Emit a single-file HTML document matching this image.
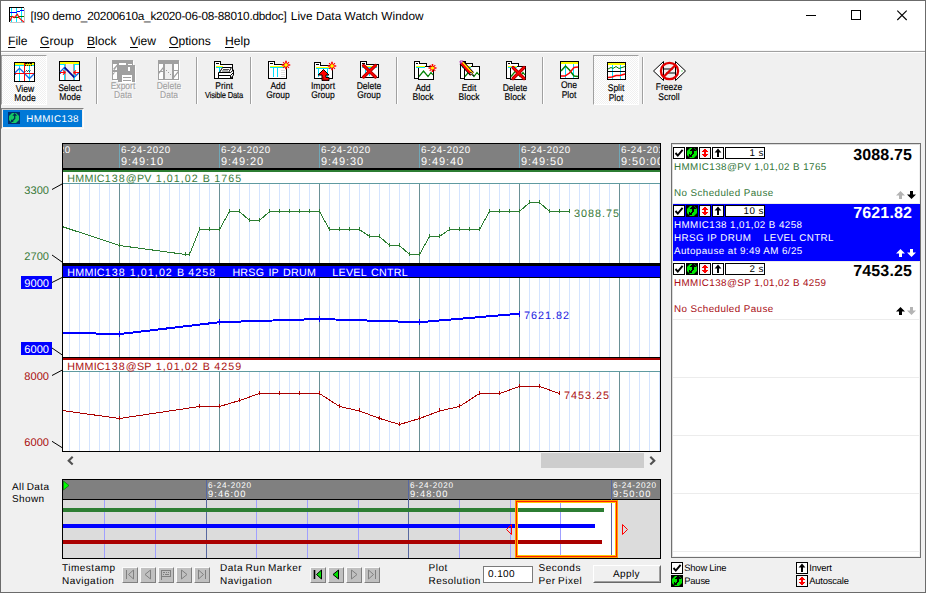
<!DOCTYPE html>
<html><head><meta charset="utf-8"><title>Live Data Watch Window</title>
<style>
*{box-sizing:border-box;margin:0;padding:0;text-rendering:geometricPrecision}
html,body{width:926px;height:593px;overflow:hidden;background:#f0f0f0}
body{font-family:"Liberation Sans",sans-serif;font-size:10.67px;color:#000;position:relative}
.abs,#win *{position:absolute}
#win{position:absolute;left:0;top:0;width:926px;height:593px;background:#f0f0f0;overflow:hidden}
#win span.t, #win text{white-space:pre}
.t{white-space:pre;line-height:1}
/* title */
#title{left:1px;top:1px;width:924px;height:30px;background:#fff}
#title .t{font-size:11.8px;left:29.5px;top:10px;color:#000;letter-spacing:-0.235px}
#menu{left:1px;top:31px;width:924px;height:19px;background:#fff}
#menu .t{font-size:12.1px;top:3.8px}
#menu u{position:static;text-decoration:underline;text-underline-offset:1.5px}
/* toolbar */
.tb{font-size:9.7px;line-height:9px;text-align:center;width:60px;white-space:pre;color:#000;transform:scaleX(0.88);transform-origin:50% 50%;-webkit-text-stroke:0.15px #000}
.tb.dis{-webkit-text-stroke:0.1px #a0a0a0;color:#a0a0a0;text-shadow:1px 1px 0 #fff}
.sep{width:2px;height:47px;top:57px;border-left:1px solid #a0a0a0;border-right:1px solid #fff}
.pressed{border:1px solid;border-color:#a0a0a0 #fff #fff #a0a0a0;background:#f8f8f8}
/* chart */
.cl{font-size:10.67px;letter-spacing:0.85px;line-height:11px;height:11px;overflow:hidden}
.yl{font-size:11.3px;line-height:13px;height:13px;text-align:right;width:32px;left:20px;padding-right:3px}
.rp{font-size:10.67px;line-height:12px}
.big{font-size:16px;font-weight:bold;right:8px;text-align:right;line-height:16px}
.ib{width:12px;height:12px;border:1px solid #000;background:#fff}
.btn3{width:16px;height:16px;background:#c0c0c0;border:1px solid;border-color:#fafafa #808080 #808080 #fafafa}
.lab{font-size:10px;line-height:13px;letter-spacing:0.5px;word-spacing:-0.8px}
</style></head><body><div id="win">
<div style="left:0;top:0;width:926px;height:593px;border:1px solid #6b6b6b;z-index:50;pointer-events:none"></div><div id="title"><svg style="left:8px;top:6px" width="16" height="16" viewBox="0 0 16 16" shape-rendering="crispEdges">
<rect x="0" y="0" width="16" height="16" fill="#fff"/>
<path d="M15.5 1V16M1 15.5H16" stroke="#c4c4c4" fill="none"/>
<path d="M2.5 1V15M7.5 1V15M12.5 1V15" stroke="#00e8ff" fill="none"/>
<path d="M1 9.5H4M4 10.5H10M10 9.5H15" stroke="#008000" fill="none"/>
<path d="M1 5.5H8M8 4.5H11M11 3.5H15" stroke="#0000ff" fill="none"/>
<path d="M1 14 L2.5 10.2 L3.8 9.4 L5.2 10.6 L8.4 7.2 L10 10.6 L12 12.6 L14.8 15" stroke="#ff0000" fill="none" stroke-width="1.15" shape-rendering="auto"/>
<path d="M0.5 0V15" stroke="#000" fill="none"/><path d="M0 0.5H15" stroke="#000" fill="none"/>
</svg><span class="t" id="t1">[I90 demo_20200610a_k2020-06-08-88010.dbdoc]</span><span class="t" id="t2" style="left:289.8px;letter-spacing:0.07px">Live Data Watch Window</span><svg style="left:794px;top:-1px" width="129" height="30" viewBox="0 0 129 30">
<path d="M11 15.5H21" stroke="#000" stroke-width="1" shape-rendering="crispEdges"/>
<rect x="56.5" y="10.5" width="9" height="9" fill="none" stroke="#000" stroke-width="1" shape-rendering="crispEdges"/>
<path d="M102.3 10.6L111.7 20M111.7 10.6L102.3 20" stroke="#000" stroke-width="1.1" fill="none"/>
</svg></div><div id="menu"><span class="t" style="left:7px"><u>F</u>ile</span><span class="t" style="left:39px"><u>G</u>roup</span><span class="t" style="left:86px"><u>B</u>lock</span><span class="t" style="left:129px"><u>V</u>iew</span><span class="t" style="left:168px"><u>O</u>ptions</span><span class="t" style="left:224px"><u>H</u>elp</span></div><div style="left:1px;top:50px;width:924px;height:1px;background:#f6f6f6"></div><div style="left:1px;top:51px;width:924px;height:1px;background:#a0a0a0"></div><div style="left:1px;top:52px;width:924px;height:1px;background:#fff"></div><div class="pressed" style="left:1px;top:55px;width:46px;height:50px;background-image:repeating-conic-gradient(#fff 0% 25%, #f0f0f0 0% 50%);background-size:2px 2px"></div><div class="pressed" style="left:593px;top:55px;width:46px;height:50px;background-image:repeating-conic-gradient(#fff 0% 25%, #f0f0f0 0% 50%);background-size:2px 2px"></div><div class="sep" style="left:96px"></div><div class="sep" style="left:196px"></div><div class="sep" style="left:250px"></div><div class="sep" style="left:396px"></div><div class="sep" style="left:542px"></div><div class="sep" style="left:642px"></div><svg style="left:14px;top:62px;overflow:visible" width="21" height="20" viewBox="0 0 21 20" shape-rendering="crispEdges" >
<rect x="0.5" y="0.5" width="20" height="19" fill="#fff" stroke="#000"/>
<rect x="1" y="1" width="19" height="2" fill="#ffff00"/>
<rect x="1" y="3" width="19" height="1" fill="#00e8ff"/>
<path d="M5.5 3V19M15.5 3V19" stroke="#00e8ff"/>
<rect x="11" y="1" width="7" height="3" fill="#000"/>
<path d="M11.5 2.2l1 1l1 -1l1 1l1 -1l1 1l1 -1" stroke="#ffff00" stroke-width="1.2" fill="none" shape-rendering="auto"/>
<path d="M5.5 2.8l0.8 -0.8l0.8 0.8l0.8 -0.8l0.8 0.8" stroke="#d8d870" stroke-width="0.7" fill="none" shape-rendering="auto"/>
<path d="M10.5 1V19M1 11.5H20" stroke="#ff0000"/>
<path d="M11.5 9.5l1 -1l1 1l1 -1l1 1l1-1" stroke="#000" stroke-width="0.9" fill="none" shape-rendering="auto"/>
<path d="M1 10.8 L5.5 6.3 L10 10.8 M11 12 L15.5 16.5 L20 12" stroke="#1464e6" stroke-width="1.25" fill="none" shape-rendering="auto"/>
<rect x="1" y="12" width="1" height="1" fill="#1464e6"/>
</svg><div class="tb" style="left:-5.5px;top:85.04px;line-height:9px">View<br>Mode</div><svg style="left:59px;top:61px;overflow:visible" width="21" height="20" viewBox="0 0 21 20" shape-rendering="crispEdges" >
<rect x="0.5" y="0.5" width="20" height="19" fill="#fff" stroke="#000"/>
<rect x="1" y="1" width="19" height="2" fill="#ffff00"/>
<rect x="1" y="3" width="19" height="1" fill="#00e8ff"/>
<rect x="7" y="3" width="7" height="16" fill="#f0f0f4"/>
<path d="M5.5 3V19M15.5 3V19" stroke="#00e8ff"/>
<path d="M6.5 3V19M14.5 3V19" stroke="#b49c9c"/>
<path d="M1 11 L5.5 6.5" stroke="#1464e6" stroke-width="1.3" fill="none" shape-rendering="auto"/>
<path d="M5.5 6.3 L15.3 16.3" stroke="#000090" stroke-width="1.7" fill="none" shape-rendering="auto"/>
<path d="M15.3 16.3 L20 11.8" stroke="#1464e6" stroke-width="1.3" fill="none" shape-rendering="auto"/>
<rect x="1" y="12" width="1" height="1" fill="#1464e6"/>
<path d="M1 11.5H6M4 9.3l2.2 2.2l-2.2 2.2M20 11.5H15M17 9.3l-2.2 2.2l2.2 2.2" stroke="#ff0000" fill="none" shape-rendering="auto" stroke-width="1.1"/>
</svg><div class="tb" style="left:40px;top:84.04px;line-height:9px">Select<br>Mode</div><svg style="left:112px;top:60px;overflow:visible" width="23" height="22" viewBox="0 0 23 22" shape-rendering="crispEdges" >
<g transform="translate(1,1)" fill="#fff"><rect x="0" y="0" width="21" height="20"/><rect x="6" y="5" width="17" height="17"/></g>
<rect x="0" y="0" width="21" height="20" fill="#a0a0a0"/>
<rect x="1" y="4" width="4" height="6" fill="#fff"/><rect x="1" y="12" width="4" height="7" fill="#fff"/>
<path d="M1 9 L5 4.5 L5 6.5 L2.5 10Z M1 13 L3.5 12 L1 15Z" fill="#a0a0a0" shape-rendering="auto"/>
<rect x="6" y="5" width="17" height="17" fill="#a0a0a0"/>
<rect x="7" y="3" width="7" height="1.6" fill="#fff"/><rect x="16" y="4" width="4" height="1.2" fill="#fff"/>
<rect x="16" y="7" width="2" height="4" fill="#fff"/>
<rect x="10" y="15" width="10" height="7" fill="#fff"/><rect x="11" y="17" width="8" height="1.4" fill="#a0a0a0"/><rect x="11" y="20" width="8" height="1" fill="#a0a0a0"/>
</svg><div class="tb dis" style="left:93px;top:81.74px;line-height:9px">Export<br>Data</div><svg style="left:158px;top:60px;overflow:visible" width="21" height="20" viewBox="0 0 21 20" shape-rendering="crispEdges" >
<g transform="translate(1,1)"><rect x="0" y="0" width="21" height="20" fill="#fff"/></g>
<rect x="0" y="0" width="21" height="20" fill="#a0a0a0"/>
<rect x="1" y="4" width="4" height="15" fill="#fff"/><rect x="7" y="4" width="7" height="15" fill="#f0f0f0"/><rect x="16" y="4" width="4" height="15" fill="#fff"/>
<path d="M1 12 L5 7 L5 9 L1 14Z M16 16 L20 11 L20 13 L16 18Z" fill="#a0a0a0" shape-rendering="auto"/>
<rect x="1" y="11" width="4" height="1" fill="#a0a0a0"/><rect x="16" y="10" width="4" height="1" fill="#a0a0a0"/>
<rect x="8" y="10" width="1" height="1" fill="#a0a0a0"/><rect x="10" y="12" width="1" height="1" fill="#a0a0a0"/><rect x="12" y="14" width="1" height="1" fill="#a0a0a0"/>
</svg><div class="tb dis" style="left:138.7px;top:81.74px;line-height:9px">Delete<br>Data</div><svg style="left:214px;top:61px;overflow:visible" width="20" height="19" viewBox="0 0 20 19" shape-rendering="crispEdges" ><path d="M0.5 0.5H6.5V3.5H18.5V17.5H0.5Z" fill="#fff" stroke="#000"/><path d="M2 2.5H5" stroke="#000"/>
<rect x="2" y="5" width="7" height="1" fill="#ffff00"/><rect x="2" y="6" width="7" height="1" fill="#00e0ff"/>
<path d="M5.5 7V13" stroke="#00e0ff"/>
<g shape-rendering="auto" stroke="#000" stroke-width="1" fill="#fff">
<path d="M8.5 6.5 H17.5 L14.5 11.5 H5.5Z"/>
<path d="M4.5 11.5 H16.5 L19.5 9 V14 L16.5 17.5 H4.5Z"/>
<path d="M4.5 14.5H16.5L19.5 11.5M16.5 14.5V17.5" fill="none"/>
<path d="M9 8.5H15M8 10H14" stroke-width="0.7"/>
</g></svg><div class="tb" style="left:193.5px;top:81.74px;line-height:9px">Print<br><span style="position:static;font-size:8.6px;letter-spacing:-0.2px">Visible Data</span></div><svg style="left:268px;top:61px;overflow:visible" width="20" height="19" viewBox="0 0 20 19" shape-rendering="crispEdges" ><path d="M0.5 0.5H6.5V3.5H18.5V17.5H0.5Z" fill="#fff" stroke="#000"/><path d="M2 2.5H5" stroke="#000"/>
<rect x="2" y="5" width="15" height="1" fill="#ffff00"/><rect x="2" y="6" width="15" height="1" fill="#00e0ff"/>
<path d="M5.5 7V16M9.5 7V16" stroke="#00e0ff" stroke-width="1"/>
<path d="M13 9.5H17M13 11.5H17M13 13.5H17M13 15.5H17" stroke="#e0e0e0"/><g shape-rendering="auto" transform="translate(18 4) scale(0.85) translate(-18 -4)"><path d="M18 -1V9M13 4H23" stroke="#ff0000" stroke-width="2"/>
<path d="M14.5 0.5L21.5 7.5M21.5 0.5L14.5 7.5" stroke="#ff0000" stroke-width="1.3"/>
<circle cx="18" cy="4" r="2" fill="#ffff00"/></g></svg><div class="tb" style="left:247.5px;top:81.74px;line-height:9px">Add<br>Group</div><svg style="left:314px;top:62px;overflow:visible" width="20" height="18" viewBox="0 0 20 18" shape-rendering="crispEdges" ><path d="M0.5 0.5H6.5V3.5H18.5V16.5H0.5Z" fill="#fff" stroke="#000"/><path d="M2 2.5H5" stroke="#000"/>
<rect x="2" y="5" width="15" height="1" fill="#ffff00"/><rect x="2" y="6" width="15" height="1" fill="#00e0ff"/>
<path d="M4.5 7V15M13.5 7V15" stroke="#00e0ff"/>
<g shape-rendering="auto"><path d="M4 13 L9.5 7.5 L15 13 H12 V15.5 H15 V18.5 H8 V13Z" fill="#ff0000" stroke="#000" stroke-width="1"/><path d="M9 15V18H14" stroke="#800000" fill="none"/></g><g shape-rendering="auto" transform="translate(18 4) scale(0.85) translate(-18 -4)"><path d="M18 -1V9M13 4H23" stroke="#ff0000" stroke-width="2"/>
<path d="M14.5 0.5L21.5 7.5M21.5 0.5L14.5 7.5" stroke="#ff0000" stroke-width="1.3"/>
<circle cx="18" cy="4" r="2" fill="#ffff00"/></g></svg><div class="tb" style="left:293.3px;top:81.74px;line-height:9px">Import<br>Group</div><svg style="left:360px;top:61px;overflow:visible" width="20" height="18" viewBox="0 0 20 18" shape-rendering="crispEdges" ><path d="M0.5 0.5H6.5V3.5H18.5V16.5H0.5Z" fill="#fff" stroke="#000"/><path d="M2 2.5H5" stroke="#000"/>
<rect x="2" y="5" width="15" height="1" fill="#ffff00"/><rect x="2" y="6" width="15" height="1" fill="#00e0ff"/>
<path d="M5.5 7V15M9.5 7V15" stroke="#00e0ff"/><g shape-rendering="auto"><path d="M3.5 4.5L15.5 16M15.5 4.5L3.5 16" stroke="#b00000" stroke-width="3.2" stroke-linecap="round"/><path d="M3.5 4.5L15.5 16M15.5 4.5L3.5 16" stroke="#ff0000" stroke-width="1.5999999999999999" stroke-linecap="round"/></g></svg><div class="tb" style="left:339.3px;top:81.74px;line-height:9px">Delete<br>Group</div><svg style="left:414px;top:61px;overflow:visible" width="21" height="19" viewBox="0 0 21 19" shape-rendering="crispEdges" ><path d="M0.5 0.5H5.5V2.5H12.5V17.5H0.5Z" fill="#fff" stroke="#000"/><path d="M2 2.5H4" stroke="#000"/>
<rect x="4.5" y="5.5" width="15" height="13" fill="#fff" stroke="#000"/>
<rect x="2" y="5" width="9" height="1" fill="#ffff00"/><rect x="2" y="6" width="9" height="1" fill="#00e0ff"/>
<path d="M5 15.5 L9.5 10 L14 15.5 L17 11.5 L19 14" stroke="#008000" stroke-width="1.2" fill="none" shape-rendering="auto"/><g shape-rendering="auto" transform="translate(18.5 7) scale(0.8) translate(-18.5 -7)"><path d="M18.5 2V12M13.5 7H23.5" stroke="#ff0000" stroke-width="2"/>
<path d="M15.0 3.5L22.0 10.5M22.0 3.5L15.0 10.5" stroke="#ff0000" stroke-width="1.3"/>
<circle cx="18.5" cy="7" r="2" fill="#ffff00"/></g></svg><div class="tb" style="left:393.3px;top:83.74px;line-height:9px">Add<br>Block</div><svg style="left:460px;top:61px;overflow:visible" width="21" height="19" viewBox="0 0 21 19" shape-rendering="crispEdges" ><path d="M0.5 0.5H5.5V2.5H12.5V17.5H0.5Z" fill="#fff" stroke="#000"/><path d="M2 2.5H4" stroke="#000"/>
<rect x="4.5" y="5.5" width="15" height="13" fill="#fff" stroke="#000"/>
<rect x="2" y="5" width="9" height="1" fill="#ffff00"/><rect x="2" y="6" width="9" height="1" fill="#00e0ff"/>
<path d="M5 15.5 L9.5 10 L14 15.5 L17 11.5 L19 14" stroke="#008000" stroke-width="1.2" fill="none" shape-rendering="auto"/><g shape-rendering="auto"><path d="M1.5 1.5 L12 13" stroke="#000" stroke-width="5" stroke-linecap="butt"/><path d="M1.5 1.5 L12 13" stroke="#ff0000" stroke-width="3.4"/><path d="M2.3 0.8 L12.8 12.3" stroke="#ffff00" stroke-width="1.2"/><path d="M0 0 L3 0 L0.5 3Z" fill="#fff" stroke="#a000a0" stroke-width="0.8"/><path d="M11 11 L14 15 L9.5 12.5Z" fill="#fff" stroke="#000" stroke-width="0.7"/></g></svg><div class="tb" style="left:439.3px;top:83.74px;line-height:9px">Edit<br>Block</div><svg style="left:506px;top:61px;overflow:visible" width="21" height="19" viewBox="0 0 21 19" shape-rendering="crispEdges" ><path d="M0.5 0.5H5.5V2.5H12.5V17.5H0.5Z" fill="#fff" stroke="#000"/><path d="M2 2.5H4" stroke="#000"/>
<rect x="4.5" y="5.5" width="15" height="13" fill="#fff" stroke="#000"/>
<rect x="2" y="5" width="9" height="1" fill="#ffff00"/><rect x="2" y="6" width="9" height="1" fill="#00e0ff"/>
<path d="M5 15.5 L9.5 10 L14 15.5 L17 11.5 L19 14" stroke="#008000" stroke-width="1.2" fill="none" shape-rendering="auto"/><g shape-rendering="auto"><path d="M7 6.5L18 17.5M18 6.5L7 17.5" stroke="#b00000" stroke-width="3.2" stroke-linecap="round"/><path d="M7 6.5L18 17.5M18 6.5L7 17.5" stroke="#ff0000" stroke-width="1.5999999999999999" stroke-linecap="round"/></g></svg><div class="tb" style="left:485.29999999999995px;top:83.74px;line-height:9px">Delete<br>Block</div><svg style="left:560px;top:61px;overflow:visible" width="19" height="18" viewBox="0 0 19 18" shape-rendering="crispEdges" >
<rect x="0.5" y="0.5" width="18" height="17" fill="#fff" stroke="#000"/>
<rect x="1" y="1" width="17" height="2" fill="#ffff00"/>
<path d="M5.5 3V17M13.5 3V17" stroke="#00e0ff" stroke-width="1.4"/>
<path d="M1 10 L5.5 5 L9.5 9 L14 15 L18 15.5" stroke="#008000" stroke-width="1.5" fill="none" shape-rendering="auto"/>
<path d="M1 15 L5 15 L9.5 12 L14 6.5 L18 6" stroke="#ff0000" stroke-width="1.5" fill="none" shape-rendering="auto"/>
</svg><div class="tb" style="left:539.3px;top:81.44px;line-height:10px">One<br>Plot</div><svg style="left:607px;top:62px;overflow:visible" width="19" height="18" viewBox="0 0 19 18" shape-rendering="crispEdges" >
<rect x="0.5" y="0.5" width="18" height="17" fill="#fff" stroke="#000"/>
<rect x="1" y="1" width="17" height="2" fill="#ffff00"/>
<path d="M5.5 3V17M13.5 3V17" stroke="#00e0ff" stroke-width="1.4"/>
<path d="M1 9.5H18" stroke="#000"/>
<path d="M1 7 L4 5.5 L6 6.5 L9 4.5 L12 6.5 L15 5.5 L18 4.5" stroke="#008000" stroke-width="1" fill="none" shape-rendering="auto"/>
<path d="M1 15.5 L5 15 L9 13.5 L13 13.5 L18 12" stroke="#ff0000" stroke-width="1.5" fill="none" shape-rendering="auto"/>
</svg><div class="tb" style="left:586px;top:83.54px;line-height:10px">Split<br>Plot</div><svg style="left:653px;top:61px;overflow:visible" width="33" height="20" viewBox="0 0 33 20" shape-rendering="crispEdges" ><g shape-rendering="auto">
<path d="M10.5 0.5 L0.5 10 L10.5 19.5Z" fill="#fff" stroke="#000" stroke-width="1"/>
<path d="M22.5 0.5 L32.5 10 L22.5 19.5Z" fill="#fff" stroke="#000" stroke-width="1"/>
<path d="M10.5 3V17M22.5 3V17" stroke="#000"/>
<path d="M11 8H20M13 12H22" stroke="#000" stroke-width="1.2"/>
<ellipse cx="16.5" cy="10" rx="8.6" ry="8.2" fill="none" stroke="#e00000" stroke-width="2.3"/>
<path d="M22.3 4.2 L10.7 15.8" stroke="#e00000" stroke-width="2.3"/>
<rect x="28.5" y="9.5" width="1" height="1" fill="#00c000"/>
</g></svg><div class="tb" style="left:639px;top:82.54px;line-height:10px">Freeze<br>Scroll</div><div style="left:1px;top:108px;width:83px;height:21px;border:1px solid;border-color:#828282 #fbfbfb #fbfbfb #828282"></div><div style="left:2px;top:109px;width:81px;height:19px;border:1px solid;border-color:#c8c8c8 #f0f0f0 #f0f0f0 #f0f0f0"></div><div style="left:3px;top:110px;width:79px;height:17px;background:#0078d7"></div><svg style="left:8px;top:112px" width="12" height="12" viewBox="0 0 12 12"><rect width="12" height="12" fill="#00306e"/><path d="M4 1 H8 L11 4 V8 L8 11 H4 L1 8 V4Z" fill="#14c864"/><path d="M6.7 2 V6.4 L3.9 9.2" stroke="#003050" stroke-width="1.3" fill="none"/><path d="M6.7 1 L9 3.8 H4.4Z M3 10 V7.2 L5.8 10Z" fill="#003050"/></svg><span class="t" style="left:26.3px;top:114.7px;font-size:9.8px;color:#fff;letter-spacing:0.38px">HMMIC138</span><svg style="left:0;top:136px" width="670" height="336" viewBox="0 136 670 336" shape-rendering="crispEdges" font-family="Liberation Sans, sans-serif"><rect x="62" y="143" width="599" height="26" fill="#000"/><rect x="63" y="144" width="597" height="24" fill="#808080"/><clipPath id="hc"><rect x="63" y="144" width="597" height="24"/></clipPath><g clip-path="url(#hc)"><text x="21" y="152.8" font-size="9.7" fill="#fff" letter-spacing="0.62" shape-rendering="auto">6-24-2020</text><text x="21" y="165" font-size="11" fill="#fff" letter-spacing="0.9" shape-rendering="auto">9:49:00</text><rect x="119" y="144" width="1" height="25" fill="#6fa8b8"/><text x="121" y="152.8" font-size="9.7" fill="#fff" letter-spacing="0.62" shape-rendering="auto">6-24-2020</text><text x="121" y="165" font-size="11" fill="#fff" letter-spacing="0.9" shape-rendering="auto">9:49:10</text><rect x="219" y="144" width="1" height="25" fill="#6fa8b8"/><text x="221" y="152.8" font-size="9.7" fill="#fff" letter-spacing="0.62" shape-rendering="auto">6-24-2020</text><text x="221" y="165" font-size="11" fill="#fff" letter-spacing="0.9" shape-rendering="auto">9:49:20</text><rect x="319" y="144" width="1" height="25" fill="#6fa8b8"/><text x="321" y="152.8" font-size="9.7" fill="#fff" letter-spacing="0.62" shape-rendering="auto">6-24-2020</text><text x="321" y="165" font-size="11" fill="#fff" letter-spacing="0.9" shape-rendering="auto">9:49:30</text><rect x="419" y="144" width="1" height="25" fill="#6fa8b8"/><text x="421" y="152.8" font-size="9.7" fill="#fff" letter-spacing="0.62" shape-rendering="auto">6-24-2020</text><text x="421" y="165" font-size="11" fill="#fff" letter-spacing="0.9" shape-rendering="auto">9:49:40</text><rect x="519" y="144" width="1" height="25" fill="#6fa8b8"/><text x="521" y="152.8" font-size="9.7" fill="#fff" letter-spacing="0.62" shape-rendering="auto">6-24-2020</text><text x="521" y="165" font-size="11" fill="#fff" letter-spacing="0.9" shape-rendering="auto">9:49:50</text><rect x="619" y="144" width="1" height="25" fill="#6fa8b8"/><text x="621" y="152.8" font-size="9.7" fill="#fff" letter-spacing="0.62" shape-rendering="auto">6-24-2020</text><text x="621" y="165" font-size="11" fill="#fff" letter-spacing="0.9" shape-rendering="auto">9:50:00</text></g><rect x="62" y="169" width="599" height="283" fill="#000"/><rect x="63" y="169" width="597" height="282" fill="#fff"/><rect x="63" y="169" width="597" height="1" fill="#000"/><rect x="63" y="170" width="597" height="2" fill="#2c7d32"/><rect x="63" y="183" width="597" height="1" fill="#5f9aa0"/><rect x="69" y="184" width="1" height="79" fill="#d4e4ff"/><rect x="79" y="184" width="1" height="79" fill="#d4e4ff"/><rect x="89" y="184" width="1" height="79" fill="#d4e4ff"/><rect x="99" y="184" width="1" height="79" fill="#d4e4ff"/><rect x="109" y="184" width="1" height="79" fill="#d4e4ff"/><rect x="119" y="184" width="1" height="79" fill="#6a9096"/><rect x="129" y="184" width="1" height="79" fill="#d4e4ff"/><rect x="139" y="184" width="1" height="79" fill="#d4e4ff"/><rect x="149" y="184" width="1" height="79" fill="#d4e4ff"/><rect x="159" y="184" width="1" height="79" fill="#d4e4ff"/><rect x="169" y="184" width="1" height="79" fill="#d4e4ff"/><rect x="179" y="184" width="1" height="79" fill="#d4e4ff"/><rect x="189" y="184" width="1" height="79" fill="#d4e4ff"/><rect x="199" y="184" width="1" height="79" fill="#d4e4ff"/><rect x="209" y="184" width="1" height="79" fill="#d4e4ff"/><rect x="219" y="184" width="1" height="79" fill="#6a9096"/><rect x="229" y="184" width="1" height="79" fill="#d4e4ff"/><rect x="239" y="184" width="1" height="79" fill="#d4e4ff"/><rect x="249" y="184" width="1" height="79" fill="#d4e4ff"/><rect x="259" y="184" width="1" height="79" fill="#d4e4ff"/><rect x="269" y="184" width="1" height="79" fill="#d4e4ff"/><rect x="279" y="184" width="1" height="79" fill="#d4e4ff"/><rect x="289" y="184" width="1" height="79" fill="#d4e4ff"/><rect x="299" y="184" width="1" height="79" fill="#d4e4ff"/><rect x="309" y="184" width="1" height="79" fill="#d4e4ff"/><rect x="319" y="184" width="1" height="79" fill="#6a9096"/><rect x="329" y="184" width="1" height="79" fill="#d4e4ff"/><rect x="339" y="184" width="1" height="79" fill="#d4e4ff"/><rect x="349" y="184" width="1" height="79" fill="#d4e4ff"/><rect x="359" y="184" width="1" height="79" fill="#d4e4ff"/><rect x="369" y="184" width="1" height="79" fill="#d4e4ff"/><rect x="379" y="184" width="1" height="79" fill="#d4e4ff"/><rect x="389" y="184" width="1" height="79" fill="#d4e4ff"/><rect x="399" y="184" width="1" height="79" fill="#d4e4ff"/><rect x="409" y="184" width="1" height="79" fill="#d4e4ff"/><rect x="419" y="184" width="1" height="79" fill="#6a9096"/><rect x="429" y="184" width="1" height="79" fill="#d4e4ff"/><rect x="439" y="184" width="1" height="79" fill="#d4e4ff"/><rect x="449" y="184" width="1" height="79" fill="#d4e4ff"/><rect x="459" y="184" width="1" height="79" fill="#d4e4ff"/><rect x="469" y="184" width="1" height="79" fill="#d4e4ff"/><rect x="479" y="184" width="1" height="79" fill="#d4e4ff"/><rect x="489" y="184" width="1" height="79" fill="#d4e4ff"/><rect x="499" y="184" width="1" height="79" fill="#d4e4ff"/><rect x="509" y="184" width="1" height="79" fill="#d4e4ff"/><rect x="519" y="184" width="1" height="79" fill="#6a9096"/><rect x="529" y="184" width="1" height="79" fill="#d4e4ff"/><rect x="539" y="184" width="1" height="79" fill="#d4e4ff"/><rect x="549" y="184" width="1" height="79" fill="#d4e4ff"/><rect x="559" y="184" width="1" height="79" fill="#d4e4ff"/><rect x="569" y="184" width="1" height="79" fill="#d4e4ff"/><rect x="579" y="184" width="1" height="79" fill="#d4e4ff"/><rect x="589" y="184" width="1" height="79" fill="#d4e4ff"/><rect x="599" y="184" width="1" height="79" fill="#d4e4ff"/><rect x="609" y="184" width="1" height="79" fill="#d4e4ff"/><rect x="619" y="184" width="1" height="79" fill="#6a9096"/><rect x="629" y="184" width="1" height="79" fill="#d4e4ff"/><rect x="639" y="184" width="1" height="79" fill="#d4e4ff"/><rect x="649" y="184" width="1" height="79" fill="#d4e4ff"/><rect x="659" y="184" width="1" height="79" fill="#d4e4ff"/><rect x="63" y="263" width="597" height="3" fill="#000"/><rect x="63" y="266" width="597" height="11" fill="#0000ff"/><rect x="63" y="277" width="597" height="1" fill="#000"/><rect x="69" y="278" width="1" height="79" fill="#d4e4ff"/><rect x="79" y="278" width="1" height="79" fill="#d4e4ff"/><rect x="89" y="278" width="1" height="79" fill="#d4e4ff"/><rect x="99" y="278" width="1" height="79" fill="#d4e4ff"/><rect x="109" y="278" width="1" height="79" fill="#d4e4ff"/><rect x="119" y="278" width="1" height="79" fill="#6a9096"/><rect x="129" y="278" width="1" height="79" fill="#d4e4ff"/><rect x="139" y="278" width="1" height="79" fill="#d4e4ff"/><rect x="149" y="278" width="1" height="79" fill="#d4e4ff"/><rect x="159" y="278" width="1" height="79" fill="#d4e4ff"/><rect x="169" y="278" width="1" height="79" fill="#d4e4ff"/><rect x="179" y="278" width="1" height="79" fill="#d4e4ff"/><rect x="189" y="278" width="1" height="79" fill="#d4e4ff"/><rect x="199" y="278" width="1" height="79" fill="#d4e4ff"/><rect x="209" y="278" width="1" height="79" fill="#d4e4ff"/><rect x="219" y="278" width="1" height="79" fill="#6a9096"/><rect x="229" y="278" width="1" height="79" fill="#d4e4ff"/><rect x="239" y="278" width="1" height="79" fill="#d4e4ff"/><rect x="249" y="278" width="1" height="79" fill="#d4e4ff"/><rect x="259" y="278" width="1" height="79" fill="#d4e4ff"/><rect x="269" y="278" width="1" height="79" fill="#d4e4ff"/><rect x="279" y="278" width="1" height="79" fill="#d4e4ff"/><rect x="289" y="278" width="1" height="79" fill="#d4e4ff"/><rect x="299" y="278" width="1" height="79" fill="#d4e4ff"/><rect x="309" y="278" width="1" height="79" fill="#d4e4ff"/><rect x="319" y="278" width="1" height="79" fill="#6a9096"/><rect x="329" y="278" width="1" height="79" fill="#d4e4ff"/><rect x="339" y="278" width="1" height="79" fill="#d4e4ff"/><rect x="349" y="278" width="1" height="79" fill="#d4e4ff"/><rect x="359" y="278" width="1" height="79" fill="#d4e4ff"/><rect x="369" y="278" width="1" height="79" fill="#d4e4ff"/><rect x="379" y="278" width="1" height="79" fill="#d4e4ff"/><rect x="389" y="278" width="1" height="79" fill="#d4e4ff"/><rect x="399" y="278" width="1" height="79" fill="#d4e4ff"/><rect x="409" y="278" width="1" height="79" fill="#d4e4ff"/><rect x="419" y="278" width="1" height="79" fill="#6a9096"/><rect x="429" y="278" width="1" height="79" fill="#d4e4ff"/><rect x="439" y="278" width="1" height="79" fill="#d4e4ff"/><rect x="449" y="278" width="1" height="79" fill="#d4e4ff"/><rect x="459" y="278" width="1" height="79" fill="#d4e4ff"/><rect x="469" y="278" width="1" height="79" fill="#d4e4ff"/><rect x="479" y="278" width="1" height="79" fill="#d4e4ff"/><rect x="489" y="278" width="1" height="79" fill="#d4e4ff"/><rect x="499" y="278" width="1" height="79" fill="#d4e4ff"/><rect x="509" y="278" width="1" height="79" fill="#d4e4ff"/><rect x="519" y="278" width="1" height="79" fill="#6a9096"/><rect x="529" y="278" width="1" height="79" fill="#d4e4ff"/><rect x="539" y="278" width="1" height="79" fill="#d4e4ff"/><rect x="549" y="278" width="1" height="79" fill="#d4e4ff"/><rect x="559" y="278" width="1" height="79" fill="#d4e4ff"/><rect x="569" y="278" width="1" height="79" fill="#d4e4ff"/><rect x="579" y="278" width="1" height="79" fill="#d4e4ff"/><rect x="589" y="278" width="1" height="79" fill="#d4e4ff"/><rect x="599" y="278" width="1" height="79" fill="#d4e4ff"/><rect x="609" y="278" width="1" height="79" fill="#d4e4ff"/><rect x="619" y="278" width="1" height="79" fill="#6a9096"/><rect x="629" y="278" width="1" height="79" fill="#d4e4ff"/><rect x="639" y="278" width="1" height="79" fill="#d4e4ff"/><rect x="649" y="278" width="1" height="79" fill="#d4e4ff"/><rect x="659" y="278" width="1" height="79" fill="#d4e4ff"/><rect x="63" y="357" width="597" height="1" fill="#000"/><rect x="63" y="358" width="597" height="2" fill="#aa0000"/><rect x="63" y="371" width="597" height="1" fill="#5f9aa0"/><rect x="69" y="372" width="1" height="79" fill="#d4e4ff"/><rect x="79" y="372" width="1" height="79" fill="#d4e4ff"/><rect x="89" y="372" width="1" height="79" fill="#d4e4ff"/><rect x="99" y="372" width="1" height="79" fill="#d4e4ff"/><rect x="109" y="372" width="1" height="79" fill="#d4e4ff"/><rect x="119" y="372" width="1" height="79" fill="#6a9096"/><rect x="129" y="372" width="1" height="79" fill="#d4e4ff"/><rect x="139" y="372" width="1" height="79" fill="#d4e4ff"/><rect x="149" y="372" width="1" height="79" fill="#d4e4ff"/><rect x="159" y="372" width="1" height="79" fill="#d4e4ff"/><rect x="169" y="372" width="1" height="79" fill="#d4e4ff"/><rect x="179" y="372" width="1" height="79" fill="#d4e4ff"/><rect x="189" y="372" width="1" height="79" fill="#d4e4ff"/><rect x="199" y="372" width="1" height="79" fill="#d4e4ff"/><rect x="209" y="372" width="1" height="79" fill="#d4e4ff"/><rect x="219" y="372" width="1" height="79" fill="#6a9096"/><rect x="229" y="372" width="1" height="79" fill="#d4e4ff"/><rect x="239" y="372" width="1" height="79" fill="#d4e4ff"/><rect x="249" y="372" width="1" height="79" fill="#d4e4ff"/><rect x="259" y="372" width="1" height="79" fill="#d4e4ff"/><rect x="269" y="372" width="1" height="79" fill="#d4e4ff"/><rect x="279" y="372" width="1" height="79" fill="#d4e4ff"/><rect x="289" y="372" width="1" height="79" fill="#d4e4ff"/><rect x="299" y="372" width="1" height="79" fill="#d4e4ff"/><rect x="309" y="372" width="1" height="79" fill="#d4e4ff"/><rect x="319" y="372" width="1" height="79" fill="#6a9096"/><rect x="329" y="372" width="1" height="79" fill="#d4e4ff"/><rect x="339" y="372" width="1" height="79" fill="#d4e4ff"/><rect x="349" y="372" width="1" height="79" fill="#d4e4ff"/><rect x="359" y="372" width="1" height="79" fill="#d4e4ff"/><rect x="369" y="372" width="1" height="79" fill="#d4e4ff"/><rect x="379" y="372" width="1" height="79" fill="#d4e4ff"/><rect x="389" y="372" width="1" height="79" fill="#d4e4ff"/><rect x="399" y="372" width="1" height="79" fill="#d4e4ff"/><rect x="409" y="372" width="1" height="79" fill="#d4e4ff"/><rect x="419" y="372" width="1" height="79" fill="#6a9096"/><rect x="429" y="372" width="1" height="79" fill="#d4e4ff"/><rect x="439" y="372" width="1" height="79" fill="#d4e4ff"/><rect x="449" y="372" width="1" height="79" fill="#d4e4ff"/><rect x="459" y="372" width="1" height="79" fill="#d4e4ff"/><rect x="469" y="372" width="1" height="79" fill="#d4e4ff"/><rect x="479" y="372" width="1" height="79" fill="#d4e4ff"/><rect x="489" y="372" width="1" height="79" fill="#d4e4ff"/><rect x="499" y="372" width="1" height="79" fill="#d4e4ff"/><rect x="509" y="372" width="1" height="79" fill="#d4e4ff"/><rect x="519" y="372" width="1" height="79" fill="#6a9096"/><rect x="529" y="372" width="1" height="79" fill="#d4e4ff"/><rect x="539" y="372" width="1" height="79" fill="#d4e4ff"/><rect x="549" y="372" width="1" height="79" fill="#d4e4ff"/><rect x="559" y="372" width="1" height="79" fill="#d4e4ff"/><rect x="569" y="372" width="1" height="79" fill="#d4e4ff"/><rect x="579" y="372" width="1" height="79" fill="#d4e4ff"/><rect x="589" y="372" width="1" height="79" fill="#d4e4ff"/><rect x="599" y="372" width="1" height="79" fill="#d4e4ff"/><rect x="609" y="372" width="1" height="79" fill="#d4e4ff"/><rect x="619" y="372" width="1" height="79" fill="#6a9096"/><rect x="629" y="372" width="1" height="79" fill="#d4e4ff"/><rect x="639" y="372" width="1" height="79" fill="#d4e4ff"/><rect x="649" y="372" width="1" height="79" fill="#d4e4ff"/><rect x="659" y="372" width="1" height="79" fill="#d4e4ff"/><text x="67.3" y="181.6" font-size="10.7" fill="#3a7a3a" shape-rendering="auto" xml:space="preserve"><tspan letter-spacing="0.27">HMMIC</tspan><tspan letter-spacing="1.05">138</tspan><tspan letter-spacing="0.27">@PV</tspan><tspan letter-spacing="1.05"> 1,01,02 </tspan><tspan letter-spacing="0.27">B</tspan><tspan letter-spacing="1.05"> 1765</tspan></text><text x="67.3" y="275.6" font-size="10.7" fill="#fff" shape-rendering="auto" xml:space="preserve"><tspan letter-spacing="0.27">HMMIC</tspan><tspan letter-spacing="1.05">138 1,01,02 </tspan><tspan letter-spacing="0.27">B</tspan><tspan letter-spacing="1.05"> 4258    </tspan><tspan letter-spacing="0.27">HRSG</tspan><tspan letter-spacing="1.05"> </tspan><tspan letter-spacing="0.27">IP</tspan><tspan letter-spacing="1.05"> </tspan><tspan letter-spacing="0.27">DRUM</tspan><tspan letter-spacing="1.05">    </tspan><tspan letter-spacing="0.27">LEVEL</tspan><tspan letter-spacing="1.05"> </tspan><tspan letter-spacing="0.27">CNTRL</tspan></text><text x="67.3" y="369.6" font-size="10.7" fill="#aa1010" shape-rendering="auto" xml:space="preserve"><tspan letter-spacing="0.27">HMMIC</tspan><tspan letter-spacing="1.05">138</tspan><tspan letter-spacing="0.27">@SP</tspan><tspan letter-spacing="1.05"> 1,01,02 </tspan><tspan letter-spacing="0.27">B</tspan><tspan letter-spacing="1.05"> 4259</tspan></text><clipPath id="pc"><rect x="63" y="169" width="597" height="282"/></clipPath><g clip-path="url(#pc)" shape-rendering="auto"><path d="M19.5 212.5 L119.5 245.5 L185.5 254.5 L189.5 254.5 L199.5 229.5 L209.5 229.5 L219.5 229.5 L229.5 211.5 L239.5 211.5 L249.5 220.5 L259.5 220.5 L269.5 211.5 L279.5 211.5 L289.5 211.5 L299.5 211.5 L309.5 211.5 L319.5 211.5 L329.5 229.5 L339.5 229.5 L349.5 229.5 L359.5 229.5 L369.5 236.5 L379.5 236.5 L389.5 245.5 L399.5 245.5 L409.5 254.5 L419.5 254.5 L429.5 236.5 L439.5 236.5 L449.5 229.5 L459.5 229.5 L469.5 229.5 L479.5 229.5 L489.5 211.5 L499.5 211.5 L509.5 211.5 L519.5 211.5 L529.5 202.5 L539.5 202.5 L549.5 211.5 L559.5 211.5 L569.5 211.5" fill="none" stroke="#2c7d32" stroke-width="1" shape-rendering="crispEdges"/><path d="M185.5 252.0V256.0M189.5 252.0V256.0M199.5 227.0V231.0M209.5 227.0V231.0M219.5 227.0V231.0M229.5 209.0V213.0M239.5 209.0V213.0M249.5 218.0V222.0M259.5 218.0V222.0M269.5 209.0V213.0M279.5 209.0V213.0M289.5 209.0V213.0M299.5 209.0V213.0M309.5 209.0V213.0M319.5 209.0V213.0M329.5 227.0V231.0M339.5 227.0V231.0M349.5 227.0V231.0M359.5 227.0V231.0M369.5 234.0V238.0M379.5 234.0V238.0M389.5 243.0V247.0M399.5 243.0V247.0M409.5 252.0V256.0M419.5 252.0V256.0M429.5 234.0V238.0M439.5 234.0V238.0M449.5 227.0V231.0M459.5 227.0V231.0M469.5 227.0V231.0M479.5 227.0V231.0M489.5 209.0V213.0M499.5 209.0V213.0M509.5 209.0V213.0M519.5 209.0V213.0M529.5 200.0V204.0M539.5 200.0V204.0M549.5 209.0V213.0M559.5 209.0V213.0M569.5 209.0V213.0M119.5 243V247" stroke="#2c7d32" stroke-width="1" fill="none" shape-rendering="crispEdges"/><path d="M19.5 331.6 L119.5 334.1 L219.5 322.2 L319.5 319.0 L419.5 322.2 L519.5 313.7" fill="none" stroke="#0000ff" stroke-width="2" stroke-linejoin="round" shape-rendering="crispEdges"/><path d="M119.5 331V337M219.5 319V325M319.5 316V322M419.5 319V325M519.5 311V317" stroke="#0000ff" stroke-width="1" shape-rendering="crispEdges"/><path d="M19.5 404.5 L119.5 418.5 L199.5 406.5 L219.5 406.5 L239.5 400.5 L259.5 393.5 L279.5 393.5 L299.5 393.5 L319.5 393.5 L339.5 406.5 L359.5 411 L379.5 418.4 L399.5 424.5 L419.5 418.5 L439.5 411 L459.5 406.5 L479.5 393.5 L499.5 393.5 L519.5 386.5 L539.5 386.5 L559.5 393.5" fill="none" stroke="#aa0000" stroke-width="1" shape-rendering="crispEdges"/><path d="M119.5 416V420M199.5 404V408M219.5 404V408M239.5 398V402M259.5 391V395M279.5 391V395M299.5 391V395M319.5 391V395M339.5 404V408M359.5 408V412M379.5 416V420M399.5 422V426M419.5 416V420M439.5 408V412M459.5 404V408M479.5 391V395M499.5 391V395M519.5 384V388M539.5 384V388M559.5 391V395" stroke="#aa0000" stroke-width="1" fill="none" shape-rendering="crispEdges"/></g><text x="574" y="217.2" font-size="10.8" fill="#3a7a3a" letter-spacing="1.0" shape-rendering="auto">3088.75</text><text x="524" y="319.2" font-size="10.8" fill="#2020e0" letter-spacing="1.0" shape-rendering="auto">7621.82</text><text x="564" y="398.6" font-size="10.8" fill="#aa1010" letter-spacing="1.0" shape-rendering="auto">7453.25</text><g shape-rendering="auto" stroke="#000" stroke-width="1" fill="none"><path d="M52 189.5L62 184"/><path d="M52 255L62 262"/><path d="M52 282.5L62 277.5"/><path d="M52 348L62 354.8"/><path d="M52 375.5L62 370.2"/><path d="M52 441.3L62 447.6"/></g><rect x="21" y="276" width="31" height="13" fill="#0000ff"/><rect x="21" y="342" width="31" height="13" fill="#0000ff"/><text x="49" y="194" font-size="11.1" fill="#3a7a3a" text-anchor="end" shape-rendering="auto">3300</text><text x="49" y="260.2" font-size="11.1" fill="#3a7a3a" text-anchor="end" shape-rendering="auto">2700</text><text x="49" y="286.8" font-size="11.1" fill="#fff" text-anchor="end" shape-rendering="auto">9000</text><text x="49" y="352.8" font-size="11.1" fill="#fff" text-anchor="end" shape-rendering="auto">6000</text><text x="49" y="380.3" font-size="11.1" fill="#aa1010" text-anchor="end" shape-rendering="auto">8000</text><text x="49" y="446.3" font-size="11.1" fill="#aa1010" text-anchor="end" shape-rendering="auto">6000</text><rect x="541" y="453" width="103" height="15" fill="#cdcdcd"/><g shape-rendering="auto" stroke="#505050" stroke-width="2.1" fill="none"><path d="M72.7 456.8 L68.7 460.7 L72.7 464.6"/><path d="M650.3 456.8 L654.3 460.7 L650.3 464.6"/></g></svg><svg style="left:0;top:474px" width="670" height="90" viewBox="0 474 670 90" shape-rendering="crispEdges" font-family="Liberation Sans, sans-serif"><rect x="62" y="479" width="599" height="80" fill="#000"/><rect x="63" y="480" width="597" height="19" fill="#808080"/><rect x="63" y="500" width="597" height="58" fill="#dcdcdc"/><rect x="518" y="500" width="97" height="58" fill="#fff"/><rect x="104" y="500" width="1" height="58" fill="#a0a0ff"/><rect x="155" y="500" width="1" height="58" fill="#a0a0ff"/><rect x="206" y="480" width="1" height="78" fill="#5868a0"/><rect x="256" y="500" width="1" height="58" fill="#a0a0ff"/><rect x="307" y="500" width="1" height="58" fill="#a0a0ff"/><rect x="358" y="500" width="1" height="58" fill="#a0a0ff"/><rect x="408" y="480" width="1" height="78" fill="#5868a0"/><rect x="459" y="500" width="1" height="58" fill="#a0a0ff"/><rect x="510" y="500" width="1" height="58" fill="#a0a0ff"/><rect x="560" y="500" width="1" height="58" fill="#a0a0ff"/><rect x="611" y="480" width="1" height="78" fill="#5868a0"/><clipPath id="oc"><rect x="63" y="480" width="597" height="19"/></clipPath><g clip-path="url(#oc)" shape-rendering="auto"><text x="208" y="488.2" font-size="8.2" fill="#fff" letter-spacing="0.72">6-24-2020</text><text x="208" y="497.2" font-size="9.3" fill="#fff" letter-spacing="1.08">9:46:00</text><text x="410" y="488.2" font-size="8.2" fill="#fff" letter-spacing="0.72">6-24-2020</text><text x="410" y="497.2" font-size="9.3" fill="#fff" letter-spacing="1.08">9:48:00</text><text x="613" y="488.2" font-size="8.2" fill="#fff" letter-spacing="0.72">6-24-2020</text><text x="613" y="497.2" font-size="9.3" fill="#fff" letter-spacing="1.08">9:50:00</text></g><rect x="63" y="508" width="541" height="4" fill="#2c7d32"/><rect x="63" y="524" width="532" height="4" fill="#0000ff"/><rect x="63" y="540" width="539" height="4" fill="#aa0000"/><rect x="611" y="500" width="1" height="58" fill="#5868a0"/><rect x="515.5" y="500.5" width="102" height="57" fill="none" stroke="#ffa500"/><rect x="516.5" y="501.5" width="100" height="55" fill="none" stroke="#ff2000"/><rect x="517.5" y="502.5" width="98" height="53" fill="none" stroke="#ffc800"/><g shape-rendering="auto" fill="none" stroke="#ff0000" stroke-width="1"><path d="M511.5 524.5 L506.5 529.5 L511.5 534.5Z"/><path d="M622.5 524.5 L627.5 529.5 L622.5 534.5Z"/></g><path d="M63.5 481 L69 485.5 L63.5 490Z" fill="#00ff00" stroke="#006000" stroke-width="0.6" shape-rendering="auto"/></svg><div class="lab" style="left:12px;top:482px;letter-spacing:0.4px;line-height:12px;font-size:10px">All Data<br>Shown</div><div style="left:671px;top:143px;width:250px;height:415px;background:#fff;border:1px solid #707070"></div><div style="left:672px;top:144px;width:248px;height:413px;border:1px solid;border-color:#dcdcdc #f0f0f0 #f0f0f0 #dcdcdc"></div><div style="left:673px;top:203px;width:246px;height:1px;background:#ececec"></div><div style="left:673px;top:261px;width:246px;height:1px;background:#ececec"></div><div style="left:673px;top:319px;width:246px;height:1px;background:#ececec"></div><div style="left:673px;top:377px;width:246px;height:1px;background:#ececec"></div><div style="left:673px;top:435px;width:246px;height:1px;background:#ececec"></div><div style="left:673px;top:493px;width:246px;height:1px;background:#ececec"></div><div style="left:673px;top:551px;width:246px;height:1px;background:#ececec"></div><div style="left:673px;top:204px;width:247px;height:57px;background:#0000ff"></div><svg style="left:673px;top:147px" width="12" height="12" viewBox="0 0 12 12"><rect x="0.5" y="0.5" width="11" height="11" fill="#fff" stroke="#000" shape-rendering="crispEdges"/><path d="M2.5 6 L4.8 8.6 L9.6 2.8" stroke="#000" stroke-width="1.9" fill="none"/></svg><svg style="left:686px;top:147px" width="12" height="12" viewBox="0 0 12 12" shape-rendering="crispEdges"><rect width="12" height="12" fill="#000"/><path d="M4 1 H8 L11 4 V8 L8 11 H4 L1 8 V4Z" fill="#00e600" shape-rendering="auto"/><rect x="6" y="1" width="2" height="1" fill="#000"/><rect x="5" y="2" width="4" height="1" fill="#000"/><rect x="4" y="3" width="6" height="1" fill="#000"/><rect x="6" y="4" width="2" height="1" fill="#000"/><rect x="6" y="5" width="2" height="1" fill="#000"/><rect x="6" y="6" width="2" height="1" fill="#000"/><rect x="5" y="7" width="2" height="1" fill="#000"/><rect x="3" y="7" width="1" height="1" fill="#000"/><rect x="3" y="8" width="3" height="1" fill="#000"/><rect x="3" y="9" width="3" height="1" fill="#000"/><rect x="3" y="8" width="1" height="1" fill="#000"/></svg><svg style="left:699px;top:147px" width="12" height="12" viewBox="0 0 12 12" shape-rendering="crispEdges"><rect x="0.5" y="0.5" width="11" height="11" fill="#fff" stroke="#000"/><rect x="1" y="1" width="10" height="10" fill="#f6f6f6"/><rect x="5" y="2" width="2" height="1" fill="#ff0000"/><rect x="4" y="3" width="4" height="1" fill="#ff0000"/><rect x="3" y="4" width="6" height="1" fill="#ff0000"/><rect x="5" y="5" width="2" height="1" fill="#ff0000"/><rect x="5" y="6" width="2" height="1" fill="#ff0000"/><rect x="3" y="7" width="6" height="1" fill="#ff0000"/><rect x="4" y="8" width="4" height="1" fill="#ff0000"/><rect x="5" y="9" width="2" height="1" fill="#ff0000"/></svg><svg style="left:712px;top:147px" width="12" height="12" viewBox="0 0 12 12"><rect x="0.5" y="0.5" width="11" height="11" fill="#fff" stroke="#000" shape-rendering="crispEdges"/><path d="M6 4V10" stroke="#000" stroke-width="2"/><path d="M6 1.6 L9.4 5.6 H2.6Z" fill="#000"/></svg><div style="left:725px;top:147px;width:40px;height:12px;background:#fff;border:1px solid #000"></div><span class="t" style="left:725px;top:148.1px;width:39px;text-align:right;font-size:9.8px;line-height:11px;letter-spacing:0.5px">1 s</span><span class="t" style="left:800px;width:112px;text-align:right;top:148.1px;letter-spacing:0.12px;font-size:16px;font-weight:bold;color:#000;line-height:16px">3088.75</span><span class="t" style="left:674px;top:161.6px;font-size:9.8px;line-height:12px;color:#33763a;letter-spacing:0.42px">HMMIC138@PV 1,01,02 B 1765</span><span class="t" style="left:674px;top:187.6px;font-size:9.8px;line-height:12px;color:#33763a;letter-spacing:0.42px">No Scheduled Pause</span><svg style="left:896px;top:190.7px" width="9" height="8" viewBox="0 0 9 8"><path d="M4.5 0 L9 4.5 H6 V8 H3 V4.5 H0Z" fill="#b4b4b4"/></svg><svg style="left:907px;top:190.7px" width="9" height="8" viewBox="0 0 9 8"><path d="M4.5 8 L9 3.5 H6 V0 H3 V3.5 H0Z" fill="#000"/></svg><svg style="left:673px;top:205px" width="12" height="12" viewBox="0 0 12 12"><rect x="0.5" y="0.5" width="11" height="11" fill="#fff" stroke="#000" shape-rendering="crispEdges"/><path d="M2.5 6 L4.8 8.6 L9.6 2.8" stroke="#000" stroke-width="1.9" fill="none"/></svg><svg style="left:686px;top:205px" width="12" height="12" viewBox="0 0 12 12" shape-rendering="crispEdges"><rect width="12" height="12" fill="#000"/><path d="M4 1 H8 L11 4 V8 L8 11 H4 L1 8 V4Z" fill="#00e600" shape-rendering="auto"/><rect x="6" y="1" width="2" height="1" fill="#000"/><rect x="5" y="2" width="4" height="1" fill="#000"/><rect x="4" y="3" width="6" height="1" fill="#000"/><rect x="6" y="4" width="2" height="1" fill="#000"/><rect x="6" y="5" width="2" height="1" fill="#000"/><rect x="6" y="6" width="2" height="1" fill="#000"/><rect x="5" y="7" width="2" height="1" fill="#000"/><rect x="3" y="7" width="1" height="1" fill="#000"/><rect x="3" y="8" width="3" height="1" fill="#000"/><rect x="3" y="9" width="3" height="1" fill="#000"/><rect x="3" y="8" width="1" height="1" fill="#000"/></svg><svg style="left:699px;top:205px" width="12" height="12" viewBox="0 0 12 12" shape-rendering="crispEdges"><rect x="0.5" y="0.5" width="11" height="11" fill="#fff" stroke="#000"/><rect x="1" y="1" width="10" height="10" fill="#f6f6f6"/><rect x="5" y="2" width="2" height="1" fill="#ff0000"/><rect x="4" y="3" width="4" height="1" fill="#ff0000"/><rect x="3" y="4" width="6" height="1" fill="#ff0000"/><rect x="5" y="5" width="2" height="1" fill="#ff0000"/><rect x="5" y="6" width="2" height="1" fill="#ff0000"/><rect x="3" y="7" width="6" height="1" fill="#ff0000"/><rect x="4" y="8" width="4" height="1" fill="#ff0000"/><rect x="5" y="9" width="2" height="1" fill="#ff0000"/></svg><svg style="left:712px;top:205px" width="12" height="12" viewBox="0 0 12 12"><rect x="0.5" y="0.5" width="11" height="11" fill="#fff" stroke="#000" shape-rendering="crispEdges"/><path d="M6 4V10" stroke="#000" stroke-width="2"/><path d="M6 1.6 L9.4 5.6 H2.6Z" fill="#000"/></svg><div style="left:725px;top:205px;width:40px;height:12px;background:#fff;border:1px solid #000"></div><span class="t" style="left:725px;top:206.1px;width:39px;text-align:right;font-size:9.8px;line-height:11px;letter-spacing:0.5px">10 s</span><span class="t" style="left:800px;width:112px;text-align:right;top:206.1px;letter-spacing:0.12px;font-size:16px;font-weight:bold;color:#fff;line-height:16px">7621.82</span><span class="t" style="left:674px;top:219.6px;font-size:9.8px;line-height:12px;color:#fff;letter-spacing:0.42px">HMMIC138 1,01,02 B 4258</span><span class="t" style="left:674px;top:232.6px;font-size:9.8px;line-height:12px;color:#fff;letter-spacing:0.42px">HRSG IP DRUM    LEVEL CNTRL</span><span class="t" style="left:674px;top:245.6px;font-size:9.8px;line-height:12px;color:#fff;letter-spacing:0.42px">Autopause at 9:49 AM 6/25</span><svg style="left:896px;top:248.7px" width="9" height="8" viewBox="0 0 9 8"><path d="M4.5 0 L9 4.5 H6 V8 H3 V4.5 H0Z" fill="#fff"/></svg><svg style="left:907px;top:248.7px" width="9" height="8" viewBox="0 0 9 8"><path d="M4.5 8 L9 3.5 H6 V0 H3 V3.5 H0Z" fill="#fff"/></svg><svg style="left:673px;top:263px" width="12" height="12" viewBox="0 0 12 12"><rect x="0.5" y="0.5" width="11" height="11" fill="#fff" stroke="#000" shape-rendering="crispEdges"/><path d="M2.5 6 L4.8 8.6 L9.6 2.8" stroke="#000" stroke-width="1.9" fill="none"/></svg><svg style="left:686px;top:263px" width="12" height="12" viewBox="0 0 12 12" shape-rendering="crispEdges"><rect width="12" height="12" fill="#000"/><path d="M4 1 H8 L11 4 V8 L8 11 H4 L1 8 V4Z" fill="#00e600" shape-rendering="auto"/><rect x="6" y="1" width="2" height="1" fill="#000"/><rect x="5" y="2" width="4" height="1" fill="#000"/><rect x="4" y="3" width="6" height="1" fill="#000"/><rect x="6" y="4" width="2" height="1" fill="#000"/><rect x="6" y="5" width="2" height="1" fill="#000"/><rect x="6" y="6" width="2" height="1" fill="#000"/><rect x="5" y="7" width="2" height="1" fill="#000"/><rect x="3" y="7" width="1" height="1" fill="#000"/><rect x="3" y="8" width="3" height="1" fill="#000"/><rect x="3" y="9" width="3" height="1" fill="#000"/><rect x="3" y="8" width="1" height="1" fill="#000"/></svg><svg style="left:699px;top:263px" width="12" height="12" viewBox="0 0 12 12" shape-rendering="crispEdges"><rect x="0.5" y="0.5" width="11" height="11" fill="#fff" stroke="#000"/><rect x="1" y="1" width="10" height="10" fill="#f6f6f6"/><rect x="5" y="2" width="2" height="1" fill="#ff0000"/><rect x="4" y="3" width="4" height="1" fill="#ff0000"/><rect x="3" y="4" width="6" height="1" fill="#ff0000"/><rect x="5" y="5" width="2" height="1" fill="#ff0000"/><rect x="5" y="6" width="2" height="1" fill="#ff0000"/><rect x="3" y="7" width="6" height="1" fill="#ff0000"/><rect x="4" y="8" width="4" height="1" fill="#ff0000"/><rect x="5" y="9" width="2" height="1" fill="#ff0000"/></svg><svg style="left:712px;top:263px" width="12" height="12" viewBox="0 0 12 12"><rect x="0.5" y="0.5" width="11" height="11" fill="#fff" stroke="#000" shape-rendering="crispEdges"/><path d="M6 4V10" stroke="#000" stroke-width="2"/><path d="M6 1.6 L9.4 5.6 H2.6Z" fill="#000"/></svg><div style="left:725px;top:263px;width:40px;height:12px;background:#fff;border:1px solid #000"></div><span class="t" style="left:725px;top:264.1px;width:39px;text-align:right;font-size:9.8px;line-height:11px;letter-spacing:0.5px">2 s</span><span class="t" style="left:800px;width:112px;text-align:right;top:264.1px;letter-spacing:0.12px;font-size:16px;font-weight:bold;color:#000;line-height:16px">7453.25</span><span class="t" style="left:674px;top:277.6px;font-size:9.8px;line-height:12px;color:#a80c14;letter-spacing:0.42px">HMMIC138@SP 1,01,02 B 4259</span><span class="t" style="left:674px;top:303.6px;font-size:9.8px;line-height:12px;color:#a80c14;letter-spacing:0.42px">No Scheduled Pause</span><svg style="left:896px;top:306.7px" width="9" height="8" viewBox="0 0 9 8"><path d="M4.5 0 L9 4.5 H6 V8 H3 V4.5 H0Z" fill="#000"/></svg><svg style="left:907px;top:306.7px" width="9" height="8" viewBox="0 0 9 8"><path d="M4.5 8 L9 3.5 H6 V0 H3 V3.5 H0Z" fill="#b4b4b4"/></svg><svg style="left:671px;top:562px" width="12" height="12" viewBox="0 0 12 12"><rect x="0.5" y="0.5" width="11" height="11" fill="#fff" stroke="#000" shape-rendering="crispEdges"/><path d="M2.5 6 L4.8 8.6 L9.6 2.8" stroke="#000" stroke-width="1.9" fill="none"/></svg><svg style="left:671px;top:575px" width="12" height="12" viewBox="0 0 12 12" shape-rendering="crispEdges"><rect width="12" height="12" fill="#000"/><path d="M4 1 H8 L11 4 V8 L8 11 H4 L1 8 V4Z" fill="#00e600" shape-rendering="auto"/><rect x="6" y="1" width="2" height="1" fill="#000"/><rect x="5" y="2" width="4" height="1" fill="#000"/><rect x="4" y="3" width="6" height="1" fill="#000"/><rect x="6" y="4" width="2" height="1" fill="#000"/><rect x="6" y="5" width="2" height="1" fill="#000"/><rect x="6" y="6" width="2" height="1" fill="#000"/><rect x="5" y="7" width="2" height="1" fill="#000"/><rect x="3" y="7" width="1" height="1" fill="#000"/><rect x="3" y="8" width="3" height="1" fill="#000"/><rect x="3" y="9" width="3" height="1" fill="#000"/><rect x="3" y="8" width="1" height="1" fill="#000"/></svg><svg style="left:796px;top:562px" width="12" height="12" viewBox="0 0 12 12"><rect x="0.5" y="0.5" width="11" height="11" fill="#fff" stroke="#000" shape-rendering="crispEdges"/><path d="M6 4V10" stroke="#000" stroke-width="2"/><path d="M6 1.6 L9.4 5.6 H2.6Z" fill="#000"/></svg><svg style="left:796px;top:575px" width="12" height="12" viewBox="0 0 12 12" shape-rendering="crispEdges"><rect x="0.5" y="0.5" width="11" height="11" fill="#fff" stroke="#000"/><rect x="1" y="1" width="10" height="10" fill="#f6f6f6"/><rect x="5" y="2" width="2" height="1" fill="#ff0000"/><rect x="4" y="3" width="4" height="1" fill="#ff0000"/><rect x="3" y="4" width="6" height="1" fill="#ff0000"/><rect x="5" y="5" width="2" height="1" fill="#ff0000"/><rect x="5" y="6" width="2" height="1" fill="#ff0000"/><rect x="3" y="7" width="6" height="1" fill="#ff0000"/><rect x="4" y="8" width="4" height="1" fill="#ff0000"/><rect x="5" y="9" width="2" height="1" fill="#ff0000"/></svg><span class="t" style="left:684.3px;top:562px;font-size:9.4px;line-height:12px;letter-spacing:-0.2px">Show Line</span><span class="t" style="left:684.3px;top:575px;font-size:9.4px;line-height:12px;letter-spacing:-0.2px">Pause</span><span class="t" style="left:809.3px;top:562px;font-size:9.4px;line-height:12px;letter-spacing:-0.2px">Invert</span><span class="t" style="left:809.3px;top:575px;font-size:9.4px;line-height:12px;letter-spacing:-0.2px">Autoscale</span><span class="t lab" style="left:62px;top:562.1px">Timestamp</span><span class="t lab" style="left:62px;top:575.3px">Navigation</span><span class="t lab" style="left:220px;top:562.1px">Data Run Marker</span><span class="t lab" style="left:220px;top:575.3px">Navigation</span><span class="t lab" style="left:428.5px;top:562.1px">Plot</span><span class="t lab" style="left:428.5px;top:575.3px">Resolution</span><span class="t lab" style="left:538.5px;top:562.1px">Seconds</span><span class="t lab" style="left:538.5px;top:575.3px">Per Pixel</span><div class="btn3" style="left:122px;top:567px"></div><svg style="left:122px;top:567px" width="16" height="16" viewBox="0 0 16 16"><path d="M4.5 3V12" stroke="#808080" stroke-width="1"/><path d="M11.5 3 L6.5 7.5 L11.5 12Z" fill="none" stroke="#808080"/></svg><div class="btn3" style="left:140px;top:567px"></div><svg style="left:140px;top:567px" width="16" height="16" viewBox="0 0 16 16"><path d="M10.5 3 L5 7.5 L10.5 12Z" fill="none" stroke="#808080"/></svg><div class="btn3" style="left:158px;top:567px"></div><svg style="left:158px;top:567px" width="16" height="16" viewBox="0 0 16 16"><rect x="3.5" y="3.5" width="9" height="6" fill="none" stroke="#808080"/><path d="M5 5.5H7M8 5.5H9M10 5.5H11M5 7.5H6M7 7.5H11M3.5 9V13" stroke="#808080" stroke-width="1"/></svg><div class="btn3" style="left:176px;top:567px"></div><svg style="left:176px;top:567px" width="16" height="16" viewBox="0 0 16 16"><path d="M5.5 3 L11 7.5 L5.5 12Z" fill="none" stroke="#808080"/></svg><div class="btn3" style="left:194px;top:567px"></div><svg style="left:194px;top:567px" width="16" height="16" viewBox="0 0 16 16"><path d="M11.5 3V12" stroke="#808080"/><path d="M4.5 3 L9.5 7.5 L4.5 12Z" fill="none" stroke="#808080"/></svg><div class="btn3" style="left:310px;top:567px"></div><svg style="left:310px;top:567px" width="16" height="16" viewBox="0 0 16 16"><path d="M4.5 3V12" stroke="#000" stroke-width="1.6"/><path d="M11.5 3 L6.5 7.5 L11.5 12Z" fill="#00e000" stroke="#000"/></svg><div class="btn3" style="left:328px;top:567px"></div><svg style="left:328px;top:567px" width="16" height="16" viewBox="0 0 16 16"><path d="M10.5 3 L5 7.5 L10.5 12Z" fill="#00e000" stroke="#000"/></svg><div class="btn3" style="left:346px;top:567px"></div><svg style="left:346px;top:567px" width="16" height="16" viewBox="0 0 16 16"><path d="M5.5 3 L11 7.5 L5.5 12Z" fill="none" stroke="#808080"/></svg><div class="btn3" style="left:364px;top:567px"></div><svg style="left:364px;top:567px" width="16" height="16" viewBox="0 0 16 16"><path d="M11.5 3V12" stroke="#808080"/><path d="M4.5 3 L9.5 7.5 L4.5 12Z" fill="none" stroke="#808080"/></svg><div style="left:483px;top:566px;width:50px;height:17px;background:#fff;border:1px solid #7a7a7a"></div><span class="t" style="left:488px;top:569.1px;font-size:10px;line-height:12px;letter-spacing:0.4px">0.100</span><div style="left:593px;top:565px;width:68px;height:18px;background:#f0f0f0;border:1px solid;border-color:#fff #696969 #696969 #fff"></div><div style="left:594px;top:566px;width:66px;height:16px;border:1px solid;border-color:#f0f0f0 #a0a0a0 #a0a0a0 #f0f0f0"></div><span class="t" style="left:593px;top:568.6px;width:67px;text-align:center;font-size:10px;line-height:12px;letter-spacing:0.4px">Apply</span></div></body></html>
